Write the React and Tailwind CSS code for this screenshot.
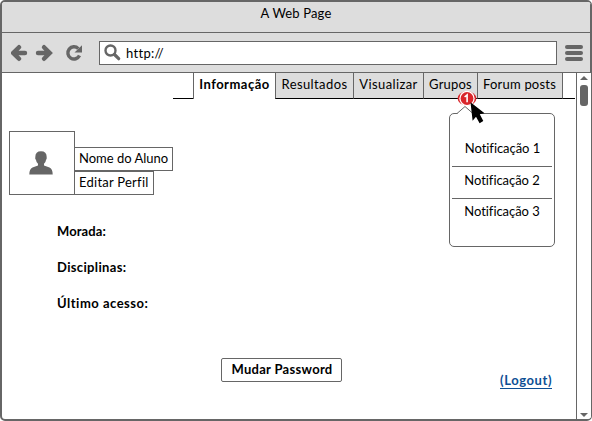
import React from "react";

const TABS = [
  { label: "Resultados", cls: "w-[78px] tracking-[0.4px]" },
  { label: "Visualizar", cls: "w-[70px] tracking-[0.4px]" },
  { label: "Grupos", cls: "w-[54px] tracking-[0.2px]", menu: true },
  { label: "Forum posts", cls: "w-[86px] border-r pr-px tracking-[0.2px]" },
];

function Badge() {
  return (
    <svg className="absolute left-[33px] top-[18px] z-20" width="20" height="15" viewBox="0 0 20 15">
      <ellipse cx="10" cy="7.5" rx="9.4" ry="7.2" fill="#d9262b" />
      <circle cx="10" cy="7.5" r="7.7" fill="#fff" />
      <circle cx="10" cy="7.5" r="6.4" fill="#d9262b" />
      <path d="M7.6 6 L10.1 4 V11.2" fill="none" stroke="#fff" strokeWidth="1.6" />
    </svg>
  );
}

function Cursor() {
  return (
    <svg className="absolute left-[46px] top-[29px] z-30" width="16" height="22" viewBox="0 0 16 22">
      <path d="M0.5 0.2 L14.6 11.2 L9.8 12.3 L13.3 19 L9.6 21.2 L6 14.7 L2.6 18.7 Z" fill="#000" />
    </svg>
  );
}

function Menu() {
  return (
    <div className="absolute left-[25px] top-[40px] z-10 h-[134px] w-[106px] rounded-[5px] border border-[#666] bg-white px-[2px] pt-[18px] font-normal tracking-[-0.05px]">
      <svg className="absolute left-[7px] top-[-8px]" width="16" height="9" viewBox="0 0 16 9">
        <path d="M0 8 L8 0 L16 8 V9 H0 Z" fill="#fff" />
        <path d="M0 7.5 L8 0.5 L16 7.5" fill="none" stroke="#666" />
      </svg>
      <div className="h-[35px] border-b border-[#666] pt-[7px] pl-[1px] text-center">Notificação 1</div>
      <div className="h-[32px] border-b border-[#666] pt-[4px] text-center">Notificação 2</div>
      <div className="h-[32px] pt-[3px] text-center">Notificação 3</div>
    </div>
  );
}

export default function App() {
  return (
    <div className="flex h-[421px] w-[592px] flex-col overflow-hidden rounded-[5px] border-2 border-r border-[#666] bg-white font-['Lato',sans-serif] text-[13px] leading-[18px] text-black">
      <header className="h-[31px] border-r border-b border-[#666] bg-[#ddd] pt-[2px] text-center tracking-[0.15px]">A Web Page</header>
      <div className="flex h-[40px] shrink-0 items-center border-r border-b border-[#666] bg-[#ddd] pl-[9px]">
        <svg width="76" height="18" viewBox="0 0 76 18" fill="none" stroke="#666">
          <path d="M14 9 H3 M8 3.2 L2.2 9 L8 14.8" strokeWidth="4.4" strokeLinecap="round" />
          <path d="M27 9 H38 M33 3.2 L38.8 9 L33 14.8" strokeWidth="4.4" strokeLinecap="round" />
          <path d="M67.3 4.6 A6.1 6.1 0 1 0 68.5 11.5" strokeWidth="3.4" />
          <path d="M71 1.2 V8.5 H63.5 Z" fill="#666" stroke="none" />
        </svg>
        <div className="ml-[12px] flex h-[24px] w-[458px] items-center border border-[#666] bg-white pl-[4px]">
          <svg width="17" height="17" viewBox="0 0 17 17" fill="none" stroke="#666">
            <circle cx="6.5" cy="6.5" r="5" strokeWidth="2.4" />
            <path d="M10.5 10.5 L14.7 14.7" strokeWidth="3.2" strokeLinecap="round" />
          </svg>
          <span className="ml-[5px] tracking-[0.3px]">http://</span>
        </div>
        <div className="ml-[8px] flex flex-col gap-[2px]">
          <i className="h-[4px] w-[18px] rounded-full bg-[#666]" />
          <i className="h-[4px] w-[18px] rounded-full bg-[#666]" />
          <i className="h-[4px] w-[18px] rounded-full bg-[#666]" />
        </div>
      </div>
      <div className="flex min-h-0 flex-1">
        <main className="w-[574px] shrink-0">
          <nav className="flex h-[26px] pl-[171px] text-center">
            <div className="w-[20px] border-b border-black" />
            <div className="w-[82px] border-l border-[#666] pt-[2px] font-bold tracking-[0.5px]">Informação</div>
            {TABS.map((t) => (
              <div key={t.label} className={`relative border-b border-l border-b-black border-l-[#666] border-r-[#666] bg-[#ddd] pt-[2px] ${t.cls}`}>
                {t.label}
                {t.menu && (
                  <>
                    <Badge />
                    <Cursor />
                    <Menu />
                  </>
                )}
              </div>
            ))}
            <div className="w-[12px] border-b border-black" />
          </nav>
          <section className="mt-[32px] ml-[7px] flex h-[64px]">
            <div className="flex w-[66px] items-center justify-center border border-[#666] pr-[2px] pb-[1px]">
              <svg width="24" height="24" viewBox="0 0 24 24" fill="#666">
                <path d="M6.3 6 Q6.3 0.3 12 0.3 Q17.7 0.3 17.7 6 Q18 8 17 9 Q16.7 11.5 15 12.8 V14.6 L20.5 16.4 Q23.7 17.8 23.7 23.5 H0.3 Q0.3 17.8 3.5 16.4 L9 14.6 V12.8 Q7.3 11.5 7 9 Q5.8 8 6.3 6 Z" />
              </svg>
            </div>
            <div className="-ml-px flex flex-col items-start justify-end whitespace-nowrap">
              <div className="h-[24px] w-[99px] border border-[#666] pt-[1px] pl-[4px]">Nome do Aluno</div>
              <div className="h-[24px] w-[80px] border border-[#666] pt-[1px] pl-[4px] tracking-[0.25px]">Editar Perfil</div>
            </div>
          </section>
          <section className="mt-[27px] ml-[55px] flex flex-col gap-[18px] font-bold">
            <p className="tracking-[0.1px]">Morada:</p>
            <p className="tracking-[0.35px]">Disciplinas:</p>
            <p className="tracking-[0.5px]">Último acesso:</p>
          </section>
          <footer className="mt-[46px] ml-[219px] flex items-start">
            <button className="h-[24px] w-[121px] rounded-[2px] border border-[#666] pb-[2px] pl-[1px] font-bold tracking-[0.3px]">Mudar Password</button>
            <a className="mt-[13px] ml-[158px] h-[18px] border-b border-[#0d4f94] font-bold tracking-[0.6px] text-[#0d4f94]">(Logout)</a>
          </footer>
        </main>
        <aside className="flex w-[15px] shrink-0 flex-col items-center justify-between border-l border-[#666] bg-white pt-[3px] pb-[2px]">
          <div className="flex flex-col items-center gap-[5px]">
            <svg width="8" height="4" viewBox="0 0 8 4"><path d="M0 4 L4 0 L8 4 Z" fill="#666" /></svg>
            <i className="h-[21px] w-[8px] rounded-[3px] bg-[#666]" />
          </div>
          <svg width="8" height="4" viewBox="0 0 8 4"><path d="M0 0 H8 L4 4 Z" fill="#666" /></svg>
        </aside>
      </div>
    </div>
  );
}
